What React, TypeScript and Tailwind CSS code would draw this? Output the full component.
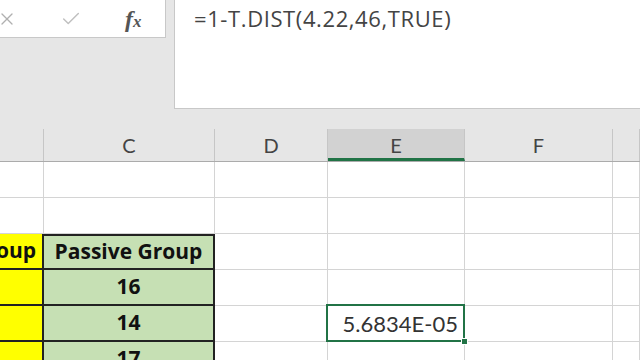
import { X, Check } from 'lucide-react';

// Columns visible in the sheet window: B (clipped), C, D, E, F, G (clipped)
const cols = [
  { key: 'B', label: '', w: 'w-[44px]' },
  { key: 'C', label: 'C', w: 'w-[171px]' },
  { key: 'D', label: 'D', w: 'w-[113px]' },
  { key: 'E', label: 'E', w: 'w-[137px]' },
  { key: 'F', label: 'F', w: 'w-[148px]' },
  { key: 'G', label: '', w: 'flex-1' },
];

const passive = ['', '', 'Passive Group', '16', '14', '17'];
const active = ['', '', 'Active Group', '', '', ''];

export default function App() {
  return (
    <div className="w-[640px] h-[360px] overflow-hidden bg-[#e6e6e6] font-['Lato','Liberation_Sans',sans-serif] text-[#222]">
      {/* formula bar */}
      <div className="flex h-[129px] gap-[8px]">
        <div className="w-[166px] h-[38px] bg-white border-r border-b border-[#c8c8c8] flex items-center shrink-0">
          <X className="ml-[-3px] text-[#b0b0b0]" size={20} strokeWidth={1.6} />
          <Check className="ml-[43px] text-[#c0c0c0]" size={22} strokeWidth={1.6} />
          <span className="ml-[43px] font-['Liberation_Serif',serif] italic font-bold text-[24px] text-[#555] leading-none">
            f<span className="text-[17px]">x</span>
          </span>
        </div>
        <div className="flex-1 h-[109px] bg-white border-l border-b border-[#c8c8c8] pl-[19px] pt-[2px]">
          <span className="font-['Open_Sans',sans-serif] text-[22px] tracking-[0.6px] text-[#444]">=1-T.DIST(4.22,46,TRUE)</span>
        </div>
      </div>

      {/* column headers */}
      <div className="flex h-[33px] border-b border-[#ababab]">
        {cols.map((c) => (
          <div
            key={c.key}
            className={`${c.w} shrink-0 flex items-center justify-center text-[20px] text-[#444] border-r border-[#c6c6c6] ${
              c.key === 'E' ? 'bg-[#d2d2d2] border-b-[3px] border-b-[#217346] pt-[3px]' : ''
            }`}
          >
            {c.label}
          </div>
        ))}
      </div>

      {/* rows */}
      <div className="bg-white">
        {passive.map((p, r) => (
          <div key={r} className="flex h-[36px]">
            {cols.map((c) => {
              if (c.key === 'B') {
                const filled = r >= 2;
                return (
                  <div
                    key={c.key}
                    className={`${c.w} shrink-0 overflow-hidden flex items-center justify-end pr-[6px] font-['Open_Sans',sans-serif] font-bold text-[21px] text-[#111] whitespace-nowrap ${
                      filled ? 'bg-[#ffff00] border-r-2 border-b-2 border-[#222]' : 'border-r border-b border-[#d4d4d4]'
                    }`}
                  >
                    {active[r]}
                  </div>
                );
              }
              if (c.key === 'C') {
                const filled = r >= 2;
                return (
                  <div
                    key={c.key}
                    className={`${c.w} shrink-0 flex items-center justify-center font-['Open_Sans',sans-serif] font-bold text-[21px] text-[#111] ${
                      filled ? 'bg-[#c6e0b4] border-r-2 border-b-2 border-[#222]' : 'border-r border-b border-[#d4d4d4]'
                    } ${r === 2 ? 'border-t-2' : ''}`}
                  >
                    {p}
                  </div>
                );
              }
              if (c.key === 'E' && r === 4) {
                return (
                  <div
                    key={c.key}
                    className={`${c.w} shrink-0 relative flex items-center justify-end pr-[6px] text-[22px] text-[#333] border-r border-b border-[#d4d4d4]`}
                  >
                    5.6834E-05
                    <div className="absolute left-[-2px] top-[-2px] right-[-1px] bottom-[-1px] border-2 border-[#217346]" />
                    <div className="absolute right-[-4px] bottom-[-4px] w-[7px] h-[7px] bg-[#217346] border border-white" />
                  </div>
                );
              }
              return <div key={c.key} className={`${c.w} shrink-0 border-r border-b border-[#d4d4d4]`} />;
            })}
          </div>
        ))}
      </div>
    </div>
  );
}
